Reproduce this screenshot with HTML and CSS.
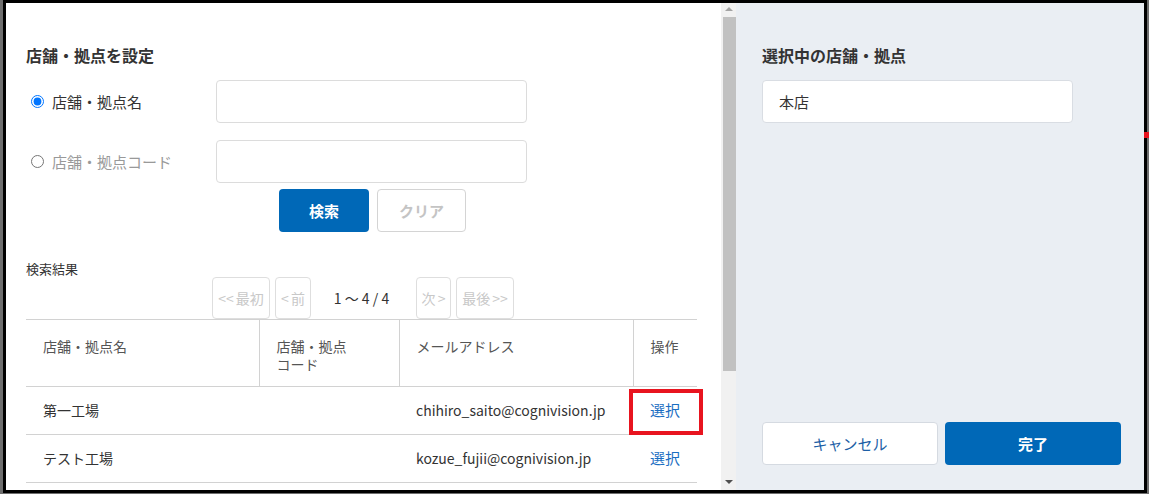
FILE: index.html
```html
<!DOCTYPE html>
<html lang="ja">
<head>
    <meta charset="UTF-8">
    <meta name="viewport" content="width=device-width, initial-scale=1.0">
    <title>店舗・拠点を設定</title>
    <link rel="stylesheet" href="styles.css">
</head>
<body>
    <div class="frame">
        <div class="main">
            <h2 class="title">店舗・拠点を設定</h2>
            <div class="search-form">
                <div class="form-row">
                    <label class="radio-label">
                        <input type="radio" name="mode" checked>
                        <span>店舗・拠点名</span>
                    </label>
                    <input type="text" class="text-input">
                </div>
                <div class="form-row">
                    <label class="radio-label disabled">
                        <input type="radio" name="mode">
                        <span>店舗・拠点コード</span>
                    </label>
                    <input type="text" class="text-input">
                </div>
                <div class="form-buttons">
                    <button class="btn btn-primary btn-search">検索</button>
                    <button class="btn btn-clear">クリア</button>
                </div>
            </div>

            <div class="result-label">検索結果</div>
            <div class="pager">
                <button class="page-btn wide">&lt;&lt; 最初</button>
                <button class="page-btn">&lt; 前</button>
                <span class="page-info">1 〜 4 / 4</span>
                <button class="page-btn">次 &gt;</button>
                <button class="page-btn wide">最後 &gt;&gt;</button>
            </div>

            <table class="result-table">
                <colgroup>
                    <col style="width: 233px">
                    <col style="width: 140px">
                    <col style="width: 234px">
                    <col style="width: 64px">
                </colgroup>
                <thead>
                    <tr>
                        <th>店舗・拠点名</th>
                        <th>店舗・拠点<br>コード</th>
                        <th>メールアドレス</th>
                        <th>操作</th>
                    </tr>
                </thead>
                <tbody>
                    <tr>
                        <td>第一工場</td>
                        <td></td>
                        <td>chihiro_saito@cognivision.jp</td>
                        <td class="action"><a href="#">選択</a><span class="highlight"></span></td>
                    </tr>
                    <tr>
                        <td>テスト工場</td>
                        <td></td>
                        <td>kozue_fujii@cognivision.jp</td>
                        <td class="action"><a href="#">選択</a></td>
                    </tr>
                </tbody>
            </table>
        </div>

        <div class="scrollbar">
            <span class="arrow up"></span>
            <span class="thumb"></span>
            <span class="arrow down"></span>
        </div>

        <div class="side">
            <h2 class="title">選択中の店舗・拠点</h2>
            <div class="selected-box">本店</div>
            <div class="side-buttons">
                <button class="btn btn-cancel">キャンセル</button>
                <button class="btn btn-primary btn-done">完了</button>
            </div>
        </div>

        <span class="edge-mark"></span>
    </div>
</body>
</html>
```

FILE: styles.css
```css
* {
    margin: 0;
    padding: 0;
    box-sizing: border-box;
}

html, body {
    height: 494px;
    overflow: hidden;
}

body {
    font-family: "Noto Sans CJK JP", "Noto Sans", sans-serif;
    color: #333;
    background-color: #6e6e6e;
    padding: 0 2px 1px 3px;
}

.frame {
    position: relative;
    height: 493px;
    border: 3px solid #000;
    display: flex;
}

.main {
    flex: 0 0 715px;
    background-color: #fff;
    padding: 40px 24px 0 20px;
    overflow: hidden;
}

.title {
    font-size: 16px;
    font-weight: 700;
    line-height: 24px;
    color: #333;
    margin-bottom: 13px;
}

.search-form {
    display: flex;
    flex-direction: column;
    gap: 17px;
}

.form-row {
    display: flex;
    align-items: center;
}

.radio-label {
    flex: 0 0 190px;
    display: flex;
    align-items: center;
    gap: 8px;
    padding-left: 5px;
    font-size: 15px;
    color: #333;
}

.radio-label input {
    width: 13px;
    height: 13px;
    margin: 0;
}

.radio-label.disabled {
    color: #999;
}

.text-input {
    width: 311px;
    height: 43px;
    border: 1px solid #dcdcdc;
    border-radius: 4px;
    background-color: #fff;
}

.form-buttons {
    display: flex;
    gap: 8px;
    margin-top: -11px;
    margin-left: 253px;
}

.btn {
    height: 43px;
    border-radius: 4px;
    font-family: inherit;
    font-size: 15px;
    font-weight: 700;
    cursor: pointer;
}

.btn-primary {
    background-color: #0068b7;
    border: none;
    color: #fff;
}

.btn-search {
    width: 90px;
}

.btn-clear {
    width: 89px;
    background-color: #fff;
    border: 1px solid #d4d4d4;
    color: #c4c4c4;
}

.result-label {
    margin-top: 28px;
    font-size: 13px;
    line-height: 17px;
    color: #333;
}

.pager {
    height: 42px;
    display: flex;
    justify-content: center;
    gap: 5px;
    padding-left: 3px;
}

.page-btn {
    width: 35px;
    height: 42px;
    padding: 0;
    background-color: #fff;
    border: 1px solid #dedede;
    border-radius: 4px;
    font-family: inherit;
    font-size: 14px;
    color: #c8c8c8;
    word-spacing: -1px;
    white-space: nowrap;
}

.page-btn.wide {
    width: 58px;
}

.page-btn:nth-child(2) {
    width: 36px;
}

.page-info {
    width: 95px;
    line-height: 42px;
    text-align: center;
    font-size: 14px;
    color: #333;
    padding-right: 4px;
}

.result-table {
    width: 671px;
    table-layout: fixed;
    border-collapse: collapse;
    font-size: 14px;
}

.result-table th {
    padding: 17px 17px 13px;
    line-height: 18px;
    font-weight: 400;
    text-align: left;
    vertical-align: top;
    color: #555;
    border-top: 1px solid #d2d2d2;
    border-bottom: 1px solid #d2d2d2;
}

.result-table th + th {
    border-left: 1px solid #d2d2d2;
}

.result-table td {
    padding: 13px 17px 14px;
    line-height: 20px;
    color: #333;
    border-bottom: 1px solid #d2d2d2;
    vertical-align: middle;
}

.result-table td.action {
    position: relative;
}

.action a {
    color: #1a6ec2;
    text-decoration: none;
    font-size: 15px;
}

.highlight {
    position: absolute;
    top: 2px;
    bottom: -1px;
    left: -4px;
    right: -6px;
    border: 4px solid #e8141f;
    pointer-events: none;
}

.scrollbar {
    flex: 0 0 15px;
    background-color: #f1f1f1;
    display: flex;
    flex-direction: column;
    align-items: center;
}

.thumb {
    width: 13px;
    height: 354px;
    margin: 0 0 0 1px;
    background-color: #c1c1c1;
}

.arrow {
    width: 0;
    height: 0;
    border-left: 4px solid transparent;
    border-right: 4px solid transparent;
}

.arrow.up {
    margin: 4px 0 6px;
    border-bottom: 4px solid #a3a3a3;
}

.arrow.down {
    margin-top: auto;
    margin-bottom: 6px;
    border-top: 4px solid #505050;
}

.side {
    flex: 1;
    background-color: #eaeef3;
    padding: 40px 23px 25px 26px;
    display: flex;
    flex-direction: column;
}

.selected-box {
    width: 311px;
    height: 43px;
    padding-left: 16px;
    display: flex;
    align-items: center;
    background-color: #fff;
    border: 1px solid #d9dde3;
    border-radius: 4px;
    font-size: 15px;
}

.side-buttons {
    margin-top: auto;
    display: flex;
    gap: 7px;
}

.btn-cancel {
    width: 176px;
    background-color: #fff;
    border: 1px solid #d5dae1;
    color: #1d5fa6;
    font-weight: 400;
}

.btn-done {
    width: 176px;
}

.edge-mark {
    position: absolute;
    right: -5px;
    top: 129px;
    width: 5px;
    height: 6px;
    background-color: #e8141f;
}
```
